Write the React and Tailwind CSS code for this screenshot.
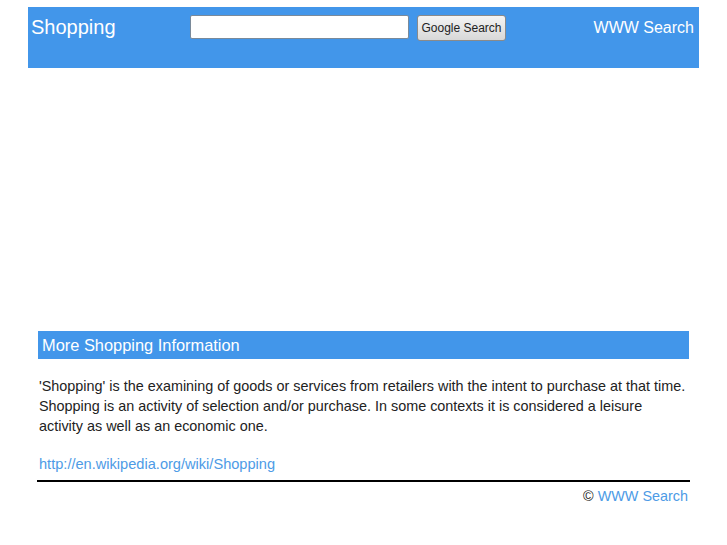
import React from 'react';

export default function App() {
    return (
        <div className="min-h-[545px] bg-white font-['Liberation_Sans',Arial,sans-serif]">
            <div className="w-[671px] ml-[28px] pt-[7px]">
                <header className="h-[61px] bg-[#4296ea] flex items-start pl-[3px] pr-[5px] pt-[8px]">
                    <span className="text-white text-[20px] leading-[24px] w-[159px]">Shopping</span>
                    <form className="flex items-start gap-[8px]" onSubmit={e => e.preventDefault()}>
                        <input
                            type="text"
                            className="w-[219px] h-[24px] bg-white border border-[#7a8a9a] rounded-[2px] outline-none px-1 text-[13px]"
                        />
                        <button
                            type="submit"
                            className="w-[89px] h-[26px] border border-[#8a8a8a] rounded-[3px] bg-gradient-to-b from-[#f4f4f4] to-[#d8d8d8] text-[12px] text-[#222]"
                        >
                            Google Search
                        </button>
                    </form>
                    <span className="ml-auto text-white text-[16px] leading-[24px] mt-[1px]">WWW Search</span>
                </header>

                <main className="px-[10px] mt-[263px]">
                    <h2 className="h-[28px] bg-[#4296ea] text-white text-[16.4px] leading-[28px] pl-[4px]">
                        More Shopping Information
                    </h2>
                    <p className="mt-[17px] pl-[1px] text-[14.4px] leading-[20px] text-[#222]">
                        'Shopping' is the examining of goods or services from retailers with the intent to purchase at that time.
                        Shopping is an activity of selection and/or purchase. In some contexts it is considered a leisure
                        activity as well as an economic one.
                    </p>
                    <a
                        href="#"
                        className="block mt-[18px] pl-[1px] text-[14.6px] leading-[20px] text-[#4d9be6]"
                    >
                        http://en.wikipedia.org/wiki/Shopping
                    </a>
                </main>

                <footer className="mx-[9px] mt-[6px]">
                    <div className="border-t-2 border-black"></div>
                    <p className="text-right text-[14.4px] leading-[20px] pr-[2px] pt-[4px] text-[#222]">
                        © <a href="#" className="text-[#4d9be6]">WWW Search</a>
                    </p>
                </footer>
            </div>
        </div>
    );
}
